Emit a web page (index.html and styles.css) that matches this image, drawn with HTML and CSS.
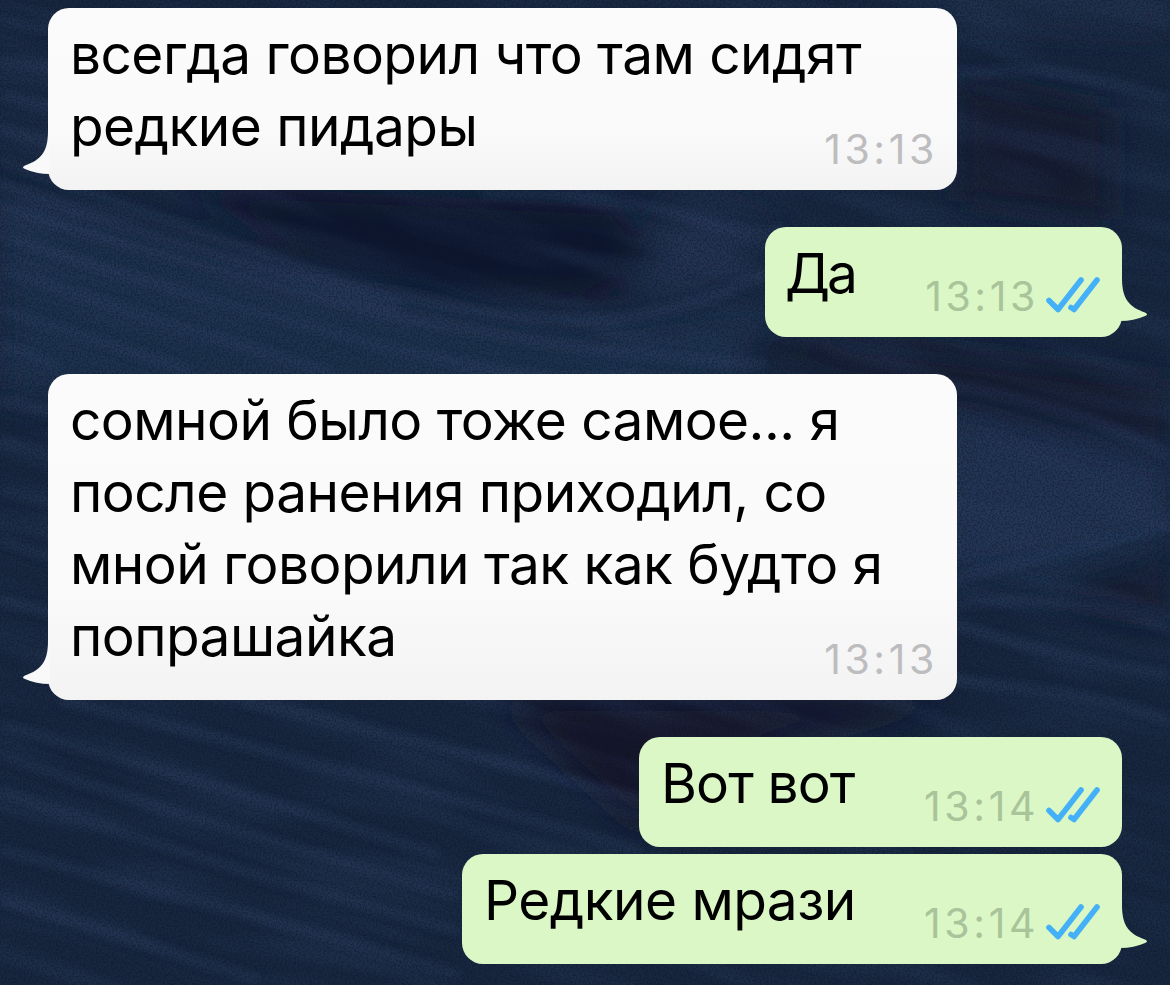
FILE: index.html
```html
<!DOCTYPE html>
<html lang="ru">
<head>
  <meta charset="UTF-8">
  <meta name="viewport" content="width=device-width, initial-scale=1.0">
  <title>Чат</title>
  <link rel="stylesheet" href="styles.css">
</head>
<body>
  <svg class="wallpaper" viewBox="0 0 1170 985" preserveAspectRatio="none" aria-hidden="true">
    <defs>
      <filter id="soft" x="-20%" y="-20%" width="140%" height="140%"><feGaussianBlur stdDeviation="4"/></filter>
      <filter id="softer" x="-30%" y="-30%" width="160%" height="160%"><feGaussianBlur stdDeviation="16"/></filter>
      <filter id="ripple" x="0" y="0" width="100%" height="100%" color-interpolation-filters="sRGB">
        <feTurbulence type="fractalNoise" baseFrequency="0.006 0.035" numOctaves="2" seed="7"/>
        <feColorMatrix values="0 0 0 0 0.17  0 0 0 0 0.24  0 0 0 0 0.37  3 0 0 0 -1.2"/>
      </filter>
      <filter id="grain" x="0" y="0" width="100%" height="100%" color-interpolation-filters="sRGB">
        <feTurbulence type="fractalNoise" baseFrequency="0.55" numOctaves="2" seed="3"/>
        <feColorMatrix values="0 0 0 0 0.05  0 0 0 0 0.08  0 0 0 0 0.15  4 0 0 0 -1.7"/>
      </filter>
    </defs>
    <rect width="1170" height="985" fill="#18273f"/>
    <g filter="url(#softer)">
      <path d="M0 190L300 275 560 325 760 300 1170 500V620L900 560 500 400 0 400Z" fill="#1f304d"/>
      <path d="M180 185L620 205 650 260 590 300 420 295 290 250Z" fill="#10192e"/>
      <path d="M680 190L770 225 740 280 640 300Z" fill="#20314f"/>
      <path d="M760 330L1170 380V450L960 410 740 370Z" fill="#131b30"/>
      <path d="M960 410L1170 460V520L950 570Z" fill="#243554"/>
      <path d="M1070 580L1170 550V620L1060 600Z" fill="#131c31"/>
      <path d="M500 700L960 700 760 745 640 830Z" fill="#12192c"/>
      <path d="M960 0H1170V30L960 20Z" fill="#20304e"/>
      <path d="M960 80L1110 110V220L960 200Z" fill="#131d33"/>
    </g>
    <g transform="rotate(15)">
      <rect x="-20" y="-380" width="1500" height="1400" filter="url(#ripple)" opacity="0.34"/>
    </g>
    <g class="ridges" filter="url(#soft)">
      <path d="M0 20Q150 50 250 60"/>
      <path d="M0 60L60 70M0 95L60 110M0 130L60 145"/>
      <path d="M0 160Q150 215 300 268T600 320Q680 315 765 275"/>
      <path d="M0 185Q220 260 400 305"/>
      <path d="M0 205Q220 275 400 315T765 365"/>
      <path d="M0 235Q200 300 380 345T640 375"/>
      <path d="M0 270Q160 320 330 372"/>
      <path d="M0 310L190 370"/>
      <path d="M0 345L60 365M0 400L60 415M0 440L60 455M0 490L60 505M0 540L60 560M0 600L60 615"/>
      <path d="M480 195Q620 195 700 220T780 225"/>
      <path d="M950 75Q1060 60 1170 100"/>
      <path d="M950 385Q1060 400 1170 455"/>
      <path d="M950 580Q1070 550 1170 525"/>
      <path d="M950 605Q1080 590 1170 630"/>
      <path d="M950 625Q1080 660 1170 675"/>
      <path d="M950 680Q1080 690 1170 720"/>
      <path d="M0 725Q200 780 440 855"/>
      <path d="M60 700Q330 765 640 850"/>
      <path d="M240 700Q430 740 640 800"/>
      <path d="M0 755Q220 830 460 895"/>
      <path d="M0 790Q220 870 460 930"/>
      <path d="M0 850Q220 905 460 975"/>
      <path d="M0 900L260 980"/>
    </g>
    <rect width="1170" height="985" filter="url(#grain)" opacity="0.4"/>
  </svg>

  <svg class="sprites" aria-hidden="true">
    <symbol id="ticks" viewBox="0 0 54 36">
      <path d="M3 23.500L12 32.500L35 3M25 30.500L28 32.500L51 3"/>
    </symbol>
    <symbol id="tail" viewBox="0 0 28 44">
      <path d="M0 0H2C2 22 10 29 25 34.500Q29 36.500 25 38Q14 43 0 43Z"/>
    </symbol>
  </svg>

  <main class="chat">
    <div class="message incoming">
      <p class="text">всегда говорил что там сидят<br>редкие пидары</p>
      <div class="meta"><time>13:13</time></div>
      <svg class="tail"><use href="#tail"/></svg>
    </div>

    <div class="message outgoing short">
      <p class="text">Да</p>
      <div class="meta"><time>13:13</time><svg class="ticks"><use href="#ticks"/></svg></div>
      <svg class="tail"><use href="#tail"/></svg>
    </div>

    <div class="message incoming">
      <p class="text">сомной было тоже самое... я<br>после ранения приходил, со<br>мной говорили так как будто я<br>попрашайка</p>
      <div class="meta"><time>13:13</time></div>
      <svg class="tail"><use href="#tail"/></svg>
    </div>

    <div class="message outgoing medium grouped">
      <p class="text">Вот вот</p>
      <div class="meta"><time>13:14</time><svg class="ticks"><use href="#ticks"/></svg></div>
    </div>

    <div class="message outgoing long">
      <p class="text">Редкие мрази</p>
      <div class="meta"><time>13:14</time><svg class="ticks"><use href="#ticks"/></svg></div>
      <svg class="tail"><use href="#tail"/></svg>
    </div>
  </main>
</body>
</html>
```
FILE: styles.css
```css
* {
  margin: 0;
  padding: 0;
  box-sizing: border-box;
}

body {
  font-family: Inter, "Liberation Sans", sans-serif;
  background-color: #18273f;
  color: #000;
  height: 985px;
  overflow: hidden;
}

.wallpaper {
  position: absolute;
  top: 0;
  left: 0;
  width: 1170px;
  height: 985px;
  z-index: -1;
}

.ridges path {
  fill: none;
  stroke: #30446a;
  stroke-width: 7;
  opacity: 0.45;
}

.sprites {
  position: absolute;
  width: 0;
  height: 0;
}

.chat {
  display: flex;
  flex-direction: column;
  padding: 8px 48px 0;
}

.message {
  position: relative;
  display: flex;
  justify-content: space-between;
  padding: 10px 22px 28px;
  margin-bottom: 37px;
  border-radius: 21px;
}

.incoming {
  align-self: flex-start;
  width: 909px;
  background: linear-gradient(#fbfbfb, #fafafa 65%, #f3f3f3);
}

.outgoing {
  align-self: flex-end;
  background-color: #dbf7c6;
}

.short {
  width: 357px;
}

.medium {
  width: 483px;
}

.long {
  width: 660px;
}

.grouped {
  margin-bottom: 7px;
}

.text {
  font-size: 55px;
  line-height: 72px;
  letter-spacing: -0.56px;
  white-space: nowrap;
}

.short .text {
  margin-left: -2px;
  letter-spacing: -3px;
}

.medium .text {
  letter-spacing: -0.9px;
}

.meta {
  display: flex;
  align-items: flex-end;
  align-self: flex-end;
  gap: 10px;
  height: 36px;
  margin-bottom: -4px;
}

.incoming .meta {
  margin-left: -200px;
}

.meta time {
  font-size: 41px;
  line-height: 50px;
  height: 42px;
  font-weight: 400;
  letter-spacing: 3.6px;
  margin-right: -3px;
  color: #bdbdbf;
}

.outgoing .meta time {
  color: #a9c39a;
}

.ticks {
  width: 54px;
  height: 36px;
  fill: none;
  stroke: #44b0f7;
  stroke-width: 5.6;
  stroke-linecap: round;
  stroke-linejoin: round;
}

.tail {
  position: absolute;
  width: 28px;
  height: 44px;
  bottom: 15px;
}

.outgoing .tail {
  right: -26px;
  fill: #dbf7c6;
}

.incoming .tail {
  left: -26px;
  fill: #f9f9f9;
  transform: scaleX(-1);
}
```
